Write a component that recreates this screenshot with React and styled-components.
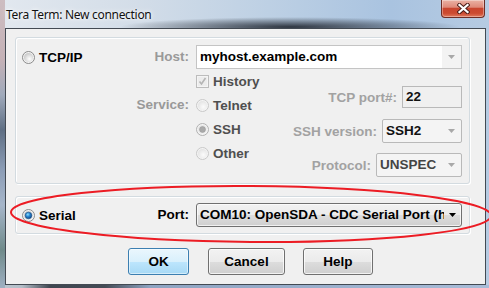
import React from 'react';
import styled, { createGlobalStyle } from 'styled-components';

const Global = createGlobalStyle`
  html, body { margin: 0; padding: 0; width: 489px; height: 288px; overflow: hidden; }
  body { font-family: "Liberation Sans", Arial, sans-serif; }
  * { box-sizing: border-box; }
`;

const Window = styled.div`
  position: relative;
  width: 489px;
  height: 288px;
  padding: 0 3px 3px 5px;
  display: flex;
  flex-direction: column;
  overflow: hidden;
  background:
    radial-gradient(ellipse 170px 10px at 290px 27px, rgba(34,40,50,0.92), rgba(34,40,50,0) 100%),
    linear-gradient(to bottom, #cdbdc1 0px, #c4b1b6 60px, #a0aabb 95px, #5f6f84 130px, #8c9db6 170px, #a6b6ca 205px, #6f8a8a 250px, #9fb0c2 288px) left top / 5px 100% no-repeat,
    linear-gradient(to right, #bcc6d0 0px, #b4bec8 22px, #3f4650 50px, #444b55 105px, #8ea4c2 150px, #a8bcd8 100%) left bottom / 100% 3px no-repeat,
    linear-gradient(to right, #e2e8ef 0%, #d3dde8 28%, #bdd0e4 55%, #a9c3e0 80%, #b6cbe2 100%);
`;

const TitleBar = styled.div`
  height: 28px;
  display: flex;
  align-items: flex-start;
  justify-content: space-between;
`;

const TitleText = styled.div`
  margin: 6px 0 0 1px;
  font: 12px "Noto Sans", "Open Sans", sans-serif;
  letter-spacing: -0.3px;
  color: #111;
  text-shadow: 0 0 6px rgba(255,255,255,0.95), 0 0 3px rgba(255,255,255,0.9);
`;

const CloseBtn = styled.div`
  width: 44px;
  height: 18px;
  margin-right: 1px;
  border: 1px solid #6e2e26;
  border-top: none;
  border-radius: 0 0 4px 4px;
  background: linear-gradient(to bottom, #eab1a4 0%, #df8a7a 42%, #c9452f 50%, #cc4b31 78%, #e07a5e 100%);
  box-shadow: inset 0 0 0 1px rgba(255,255,255,0.35);
  display: flex;
  align-items: center;
  justify-content: center;
`;

const Client = styled.div`
  flex: 1;
  background: #f0f0f0;
  border: 1px solid #434a53;
  padding: 8px 15px 0 9px;
  display: flex;
  flex-direction: column;
`;

const Group = styled.div`
  border: 1px solid #d3dbe0;
  border-radius: 3px;
  box-shadow: 1px 1px 0 #fff, inset 1px 1px 0 #fff;
  padding: ${p => p.$pad};
  margin-top: ${p => p.$mt || 0}px;
  display: grid;
  grid-template-columns: 108px 66px 100px 166px;
  grid-template-rows: ${p => p.$rows};
`;

const Choice = styled.div`
  grid-column: ${p => p.$col};
  grid-row: ${p => p.$row};
  display: flex;
  align-items: center;
  gap: 4px;
  height: 24px;
  font: bold 13.5px "Liberation Sans", Arial, sans-serif;
  color: ${p => p.$color || '#000'};
  white-space: nowrap;
`;

const Label = styled.div`
  grid-column: 2;
  grid-row: ${p => p.$row};
  text-align: right;
  padding-right: 7px;
  height: 24px;
  font: bold 13.5px/24px "Liberation Sans", Arial, sans-serif;
  color: ${p => p.$color || '#999'};
  white-space: nowrap;
`;

const Combo = styled.div`
  grid-column: 3 / 5;
  grid-row: 1;
  height: 24px;
  display: flex;
  border: 1px solid ${p => p.$enabled ? '#707070' : '#c4c4c4'};
  border-radius: ${p => p.$enabled ? '3px' : '0'};
  background: ${p => p.$enabled ? 'linear-gradient(#f2f2f2 0%, #ebebeb 50%, #dddddd 50%, #cfcfcf 100%)' : '#fff'};
  box-shadow: ${p => p.$enabled ? 'inset 0 0 0 1px rgba(255,255,255,0.7)' : 'none'};
  overflow: hidden;
`;

const ComboText = styled.div`
  flex: 1;
  min-width: 0;
  padding-left: ${p => p.$pl || 3}px;
  font: bold 13.5px/22px "Liberation Sans", Arial, sans-serif;
  color: #000;
  white-space: nowrap;
  overflow: hidden;
`;

const ComboArrow = styled.div`
  width: ${p => p.$w || 19}px;
  flex: none;
  display: flex;
  align-items: center;
  justify-content: center;
  background: ${p => p.$bg || 'transparent'};
`;

const Fields = styled.div`
  grid-column: 4;
  grid-row: 2 / span 4;
  align-self: start;
  justify-self: end;
  margin-top: 17px;
  display: flex;
  flex-direction: column;
  align-items: flex-end;
`;

const FieldRow = styled.div`
  display: flex;
  align-items: center;
  gap: 5px;
  margin-top: ${p => p.$mt || 0}px;
`;

const FieldLabel = styled.div`
  font: bold 13.5px "Liberation Sans", Arial, sans-serif;
  color: #a2a2a2;
  white-space: nowrap;
`;

const Edit = styled.div`
  width: ${p => p.$w}px;
  height: ${p => p.$h}px;
  display: flex;
  border: 1px solid #b9b9b9;
  border-radius: ${p => p.$r || 0}px;
  background: ${p => p.$bg || '#f0f0f0'};
`;

const EditText = styled.div`
  flex: 1;
  padding-left: 3px;
  font: bold 13.5px/${p => p.$lh}px "Liberation Sans", Arial, sans-serif;
  color: ${p => p.$color || '#111'};
  white-space: nowrap;
  overflow: hidden;
`;

const ButtonRow = styled.div`
  display: flex;
  margin-top: 14px;
`;

const Btn = styled.button`
  width: ${p => p.$w}px;
  height: 27px;
  margin: 0 0 0 ${p => p.$ml}px;
  padding: 0;
  border: 1px solid ${p => p.$default ? '#3c7fb1' : '#707070'};
  border-radius: 3px;
  background: ${p => p.$default
    ? 'linear-gradient(#eaf6fd 0%, #d9f0fc 50%, #bee6fd 50%, #a7d9f5 100%)'
    : 'linear-gradient(#f2f2f2 0%, #ebebeb 50%, #dddddd 50%, #cfcfcf 100%)'};
  box-shadow: inset 0 0 0 1px ${p => p.$default ? 'rgba(255,255,255,0.5)' : 'rgba(255,255,255,0.75)'};
  font: bold 13.5px "Liberation Sans", Arial, sans-serif;
  color: #000;
`;

const Overlay = styled.svg`
  position: absolute;
  left: 0;
  top: 0;
  pointer-events: none;
`;

const Radio = ({ state }) => {
  const ring = { off: '#8a8a8a', offD: '#c8c8c8', onD: '#b0b0b0', on: '#8a8a8a' }[state];
  const inner = state === 'off' || state === 'on' ? 'url(#rInEn)' : 'url(#rInDis)';
  return (
    <svg width="13" height="13" viewBox="0 0 13 13" style={{ flex: 'none' }}>
      <defs>
        <radialGradient id="rInEn" cx="0.6" cy="0.65" r="0.65">
          <stop offset="0" stopColor="#ffffff" />
          <stop offset="1" stopColor="#c9c9c9" />
        </radialGradient>
        <radialGradient id="rInDis" cx="0.6" cy="0.65" r="0.65">
          <stop offset="0" stopColor="#fbfbfb" />
          <stop offset="1" stopColor="#e4e4e4" />
        </radialGradient>
        <radialGradient id="rDotOn" cx="0.4" cy="0.35" r="0.7">
          <stop offset="0" stopColor="#8fe0ff" />
          <stop offset="0.45" stopColor="#2a86d0" />
          <stop offset="1" stopColor="#0b3f7e" />
        </radialGradient>
      </defs>
      <circle cx="6.5" cy="6.5" r="6" fill="#f4f4f4" stroke={ring} />
      <circle cx="6.5" cy="6.5" r="4.6" fill={inner} />
      {state === 'on' && <circle cx="6.5" cy="6.5" r="3.3" fill="url(#rDotOn)" stroke="#1b4f86" strokeWidth="0.6" />}
      {state === 'onD' && <circle cx="6.5" cy="6.5" r="3" fill="#a9a9a9" stroke="#9a9a9a" strokeWidth="0.6" />}
    </svg>
  );
};

const CheckD = () => (
  <svg width="13" height="13" viewBox="0 0 13 13" style={{ flex: 'none' }}>
    <rect x="0.5" y="0.5" width="12" height="12" fill="#f4f4f4" stroke="#bcbcbc" />
    <rect x="2" y="2" width="9" height="9" fill="#ececec" />
    <path d="M3.5 6.5 L5.5 9 L9.5 3" fill="none" stroke="#b4b4b4" strokeWidth="1.6" />
  </svg>
);

const Arrow = ({ color }) => (
  <svg width="7" height="4" viewBox="0 0 7 4">
    <path d="M0 0 L7 0 L3.5 4 Z" fill={color} />
  </svg>
);

export default function App() {
  return (
    <>
      <Global />
      <Window>
        <TitleBar>
          <TitleText>Tera Term: New connection</TitleText>
          <CloseBtn>
            <svg width="13" height="11" viewBox="0 0 13 11">
              <path d="M2.5 2 L10.5 9 M10.5 2 L2.5 9" stroke="#4a1d18" strokeWidth="4.2" strokeLinecap="square" />
              <path d="M2.5 2 L10.5 9 M10.5 2 L2.5 9" stroke="#ffffff" strokeWidth="2.3" strokeLinecap="square" />
            </svg>
          </CloseBtn>
        </TitleBar>
        <Client>
          <Group $pad="7px 7px 18px 6px" $rows="24px repeat(4, 24px)">
            <Choice $col="1" $row="1"><Radio state="off" />TCP/IP</Choice>
            <Label $row="1">Host:</Label>
            <Combo>
              <ComboText>myhost.example.com</ComboText>
              <ComboArrow $bg="#f3f3f3"><Arrow color="#a8a8a8" /></ComboArrow>
            </Combo>
            <Choice $col="3" $row="2" $color="#4f4f4f"><CheckD />History</Choice>
            <Label $row="3">Service:</Label>
            <Choice $col="3" $row="3" $color="#4f4f4f"><Radio state="offD" />Telnet</Choice>
            <Choice $col="3" $row="4" $color="#4f4f4f"><Radio state="onD" />SSH</Choice>
            <Choice $col="3" $row="5" $color="#4f4f4f"><Radio state="offD" />Other</Choice>
            <Fields>
              <FieldRow>
                <FieldLabel>TCP port#:</FieldLabel>
                <Edit $w={60} $h={22}><EditText $lh={20}>22</EditText></Edit>
              </FieldRow>
              <FieldRow $mt={11}>
                <FieldLabel>SSH version:</FieldLabel>
                <Edit $w={80} $h={24} $r={2} $bg="#f4f4f4">
                  <EditText $lh={22}>SSH2</EditText>
                  <ComboArrow $w={20}><Arrow color="#a8a8a8" /></ComboArrow>
                </Edit>
              </FieldRow>
              <FieldRow $mt={10}>
                <FieldLabel>Protocol:</FieldLabel>
                <Edit $w={86} $h={24} $r={2} $bg="#f4f4f4">
                  <EditText $lh={22} $color="#444">UNSPEC</EditText>
                  <ComboArrow $w={20}><Arrow color="#a8a8a8" /></ComboArrow>
                </Edit>
              </FieldRow>
            </Fields>
          </Group>
          <Group $mt={12} $pad="6px 7px 6px 6px" $rows="24px">
            <Choice $col="1" $row="1"><Radio state="on" />Serial</Choice>
            <Label $row="1" $color="#000">Port:</Label>
            <Combo $enabled>
              <ComboText>COM10: OpenSDA - CDC Serial Port (h</ComboText>
              <ComboArrow $w={17}><Arrow color="#000" /></ComboArrow>
            </Combo>
          </Group>
          <ButtonRow>
            <Btn $default $w={61} $ml={113}>OK</Btn>
            <Btn $w={77} $ml={19}>Cancel</Btn>
            <Btn $w={70} $ml={18}>Help</Btn>
          </ButtonRow>
        </Client>
        <Overlay width="489" height="288" viewBox="0 0 489 288">
          <ellipse cx="251" cy="214" rx="240" ry="28" fill="none" stroke="#ec1c24" strokeWidth="2" transform="rotate(0.4 251 214)" />
        </Overlay>
      </Window>
    </>
  );
}
